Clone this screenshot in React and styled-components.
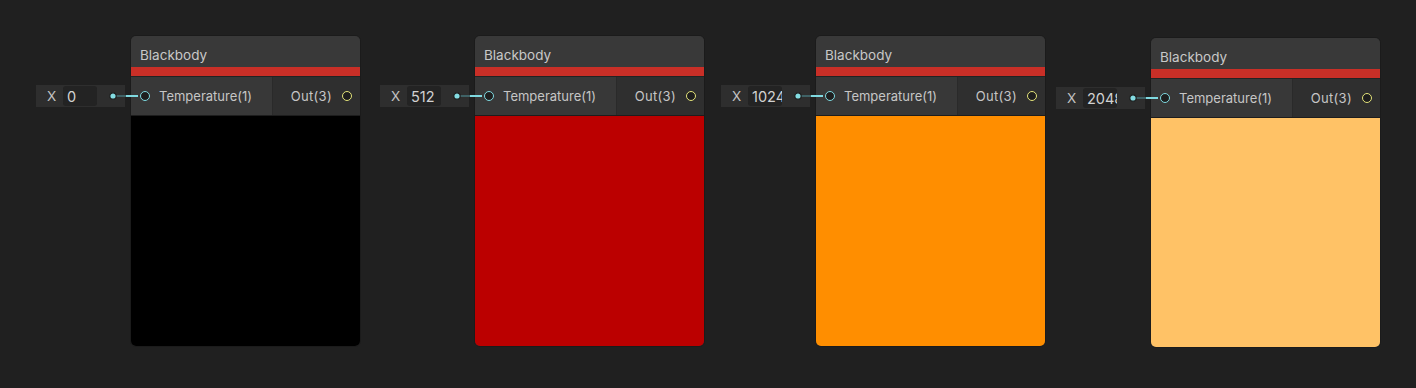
import React from 'react'
import styled, { createGlobalStyle } from 'styled-components'

const Global = createGlobalStyle`
  *, *::before, *::after {
    box-sizing: border-box;
  }
  html, body {
    margin: 0;
    padding: 0;
    background: #202020;
  }
  body {
    font-family: Inter, "Noto Sans", "Liberation Sans", sans-serif;
  }
`

const Canvas = styled.div`
  position: relative;
  width: 1416px;
  height: 388px;
  background: #202020;
  overflow: hidden;
`

const NodeBox = styled.div`
  position: absolute;
  width: 231px;
  display: flex;
  flex-direction: column;
  border: 1px solid #1b1b1b;
  border-radius: 6px;
  overflow: hidden;
  background: #2e2e2e;
  z-index: 1;
`

const Header = styled.div`
  height: 31px;
  background: #393939;
  color: #c8c8c8;
  font-size: 13.5px;
  display: flex;
  align-items: flex-end;
  padding: 0 0 4px 9px;
`

const Accent = styled.div`
  height: 10px;
  background: #c92f27;
  border-bottom: 1px solid #232323;
`

const Ports = styled.div`
  display: flex;
  height: 39px;
  border-bottom: 1px solid #1d1d1d;
`

const InPort = styled.div`
  width: 142px;
  background: #383838;
  border-right: 1px solid #2a2a2a;
  display: flex;
  align-items: center;
  gap: 9px;
  padding-left: 9px;
  color: #c6c6c6;
  font-size: 13px;
`

const OutPort = styled.div`
  flex: 1;
  background: #2f2f2f;
  display: flex;
  align-items: center;
  justify-content: flex-end;
  gap: 10px;
  padding-right: 8px;
  color: #c6c6c6;
  font-size: 13px;
  letter-spacing: 0.3px;
`

const Socket = styled.span`
  width: 10px;
  height: 10px;
  border-radius: 50%;
  border: 1.5px solid ${p => p.$color};
  background: #1e1e1e;
  flex: none;
`

const Preview = styled.div`
  height: ${p => p.$h}px;
  background: ${p => p.$color};
`

const Field = styled.div`
  position: absolute;
  width: 89px;
  height: 22px;
  background: #2e2e2e;
  display: flex;
  align-items: center;
  font-size: 13.5px;
  color: #c4c4c4;
  z-index: 2;
`

const Label = styled.span`
  width: 27px;
  padding-left: 11px;
`

const Value = styled.div`
  width: 34px;
  height: 20px;
  background: #232323;
  border-radius: 3px;
  padding-left: 4px;
  display: flex;
  align-items: center;
  overflow: hidden;
  white-space: nowrap;
  color: #d2d2d2;
  font-size: 14.5px;
`

const Wire = styled.svg`
  position: absolute;
  left: 72px;
  top: 5px;
  overflow: visible;
`

const nodes = [
  { x: 130, y: 35, h: 230, val: '0', color: '#000000' },
  { x: 474, y: 35, h: 230, val: '512', color: '#bb0000' },
  { x: 815, y: 35, h: 230, val: '1024', color: '#ff8e00' },
  { x: 1150, y: 37, h: 229, val: '2048', color: '#ffc266' },
]

const Node = ({ x, y, h, val, color }) => (
  <>
    <Field style={{ left: x - 94, top: y + 50 }}>
      <Label>X</Label>
      <Value>{val}</Value>
      <Wire width="30" height="12">
        <line x1="7" y1="6" x2="18" y2="6" stroke="#3f6266" strokeWidth="2" />
        <line x1="18" y1="6" x2="30" y2="6" stroke="#7fd9e0" strokeWidth="2" />
        <circle cx="5" cy="6" r="3.2" fill="#84dde3" stroke="#1c1c1c" strokeWidth="1.2" />
      </Wire>
    </Field>
    <NodeBox style={{ left: x, top: y }}>
      <Header>Blackbody</Header>
      <Accent />
      <Ports>
        <InPort>
          <Socket $color="#7fd9e0" />
          Temperature(1)
        </InPort>
        <OutPort>
          Out(3)
          <Socket $color="#e3e37a" />
        </OutPort>
      </Ports>
      <Preview $h={h} $color={color} />
    </NodeBox>
  </>
)

const App = () => (
  <Canvas>
    <Global />
    {nodes.map((n, i) => <Node key={i} {...n} />)}
  </Canvas>
)

export default App
